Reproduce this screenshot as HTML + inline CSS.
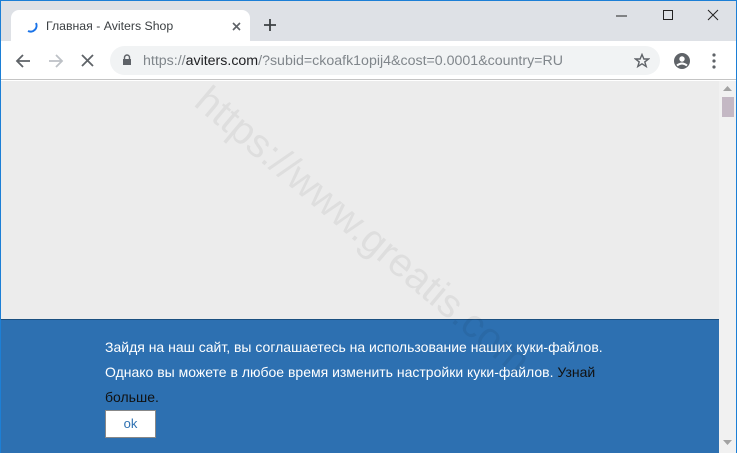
<!DOCTYPE html>
<html style="overflow:hidden;width:737px;height:453px"><head><meta charset="utf-8"><style>
*{margin:0;padding:0;box-sizing:border-box}
body{width:737px;height:453px;overflow:hidden;font-family:"Liberation Sans",Arial,sans-serif;background:#fff;position:relative}
.frame{position:absolute;inset:0;border:1px solid #1c7fd6;border-bottom:none}
.title{position:absolute;left:1px;top:1px;right:1px;height:40px;background:#dee1e6}
.tab{position:absolute;left:10px;top:9px;width:239px;height:32px;background:#fff;border-radius:8px 8px 0 0}
.tab .t{position:absolute;left:35px;top:9px;font-size:12.3px;color:#3c4043}
.tool{position:absolute;left:1px;top:41px;right:1px;height:39px;background:#fff;border-bottom:1px solid #c4c4c4}
.url{position:absolute;left:109px;top:5px;width:550px;height:29px;background:#f1f3f4;border-radius:15px}
.url .u{position:absolute;left:33px;top:7px;font-size:14.2px;color:#80868b;white-space:nowrap}
.url .u b{font-weight:normal;color:#202124}
.content{position:absolute;left:1px;top:81px;width:718px;height:238px;background:#ececec;overflow:hidden}
.sb{position:absolute;left:719px;top:81px;width:17px;height:372px;background:#f1f1f1}
.banner{position:absolute;left:1px;top:319px;width:718px;height:134px;background:#2d70b1;border-top:1px solid #1a4f80;overflow:hidden}
.banner p{position:absolute;left:104px;font-size:14px;color:#fff;white-space:nowrap}
.ok{position:absolute;left:104px;top:90px;width:51px;height:28px;background:#fff;border:1px solid #888;color:#2d70b1;font-size:13px;text-align:center;line-height:26px}
.wm{position:absolute;font-size:40px;color:rgba(0,0,0,0.06);transform:rotate(40deg);transform-origin:left top;white-space:nowrap}
.wrap{position:absolute;left:0;top:0;width:737px;height:453px;overflow:hidden;pointer-events:none}
</style></head><body>
<div class="title">
 <div class="tab">
  <svg style="position:absolute;left:14px;top:10px" width="14" height="14"><path d="M11 3 A6 6 0 0 1 3 11" stroke="#1a73e8" stroke-width="2" fill="none"/></svg>
  <span class="t">Главная - Aviters Shop</span>
  <svg style="position:absolute;left:221px;top:12px" width="9" height="9"><path d="M1 1L8 8M8 1L1 8" stroke="#5f6368" stroke-width="1.6"/></svg>
 </div>
 <svg style="position:absolute;left:263px;top:18px" width="12" height="12"><path d="M6 0V12M0 6H12" stroke="#3c4043" stroke-width="1.8"/></svg>
 <svg style="position:absolute;left:615px;top:14px" width="12" height="2"><path d="M0 1H11" stroke="#222" stroke-width="1"/></svg>
 <svg style="position:absolute;left:661px;top:8px" width="12" height="12"><rect x="1.5" y="1.5" width="9" height="9" fill="none" stroke="#222"/></svg>
 <svg style="position:absolute;left:706px;top:8px" width="12" height="12"><path d="M1 1L11 11M11 1L1 11" stroke="#222"/></svg>
</div>
<div class="tool">
 <svg style="position:absolute;left:14px;top:12px" width="16" height="16"><path d="M15 8H2M8 2L2 8L8 14" stroke="#5f6368" stroke-width="1.8" fill="none"/></svg>
 <svg style="position:absolute;left:47px;top:12px" width="16" height="16"><path d="M1 8H14M8 2L14 8L8 14" stroke="#bdc1c6" stroke-width="1.8" fill="none"/></svg>
 <svg style="position:absolute;left:80px;top:13px" width="13" height="13"><path d="M1 1L12 12M12 1L1 12" stroke="#5f6368" stroke-width="1.8"/></svg>
 <div class="url">
  <svg style="position:absolute;left:12px;top:8px" width="10" height="12"><path d="M2.5 5V3.5A2.5 2.5 0 0 1 7.5 3.5V5" stroke="#5f6368" stroke-width="1.4" fill="none"/><rect x="1" y="5" width="8" height="6" fill="#5f6368"/></svg>
  <span class="u">https://<b>aviters.com</b>/?subid=ckoafk1opij4&amp;cost=0.0001&amp;country=RU</span>
  <svg style="position:absolute;left:524px;top:7px" width="16" height="16"><path d="M8 1.5L9.9 6H14.5L10.8 8.9L12.2 13.5L8 10.8L3.8 13.5L5.2 8.9L1.5 6H6.1Z" stroke="#5f6368" stroke-width="1.4" fill="none"/></svg>
 </div>
 <svg style="position:absolute;left:672px;top:11px" width="18" height="18"><circle cx="9" cy="9" r="8" fill="#5f6368"/><circle cx="9" cy="7" r="2.7" fill="#fff"/><path d="M4 13.5Q9 9.5 14 13.5" stroke="#fff" stroke-width="2" fill="none"/></svg>
 <svg style="position:absolute;left:711px;top:12px" width="4" height="16"><circle cx="2" cy="2" r="1.6" fill="#5f6368"/><circle cx="2" cy="8" r="1.6" fill="#5f6368"/><circle cx="2" cy="14" r="1.6" fill="#5f6368"/></svg>
</div>
<div class="content"></div>
<div class="sb">
 <svg style="position:absolute;left:4px;top:5px" width="9" height="6"><path d="M0 5L4.5 0L9 5Z" fill="#a3a3a3"/></svg>
 <div style="position:absolute;left:3px;top:16px;width:12px;height:20px;background:#c4b8c4"></div>
 <svg style="position:absolute;left:4px;top:359px" width="9" height="6"><path d="M0 0L4.5 5L9 0Z" fill="#a3a3a3"/></svg>
</div>
<div class="banner">
 <p style="top:19px">Зайдя на наш сайт, вы соглашаетесь на использование наших куки-файлов.</p>
 <p style="top:44px">Однако вы можете в любое время изменить настройки куки-файлов. <span style="color:#111">Узнай</span></p>
 <p style="top:69px;color:#111">больше.</p>
 <div class="ok">ok</div>
</div>
<div class="wrap"><div class="wm" style="left:215px;top:78px">https://www.greatis.com</div></div>
<div class="frame"></div>
</body></html>
